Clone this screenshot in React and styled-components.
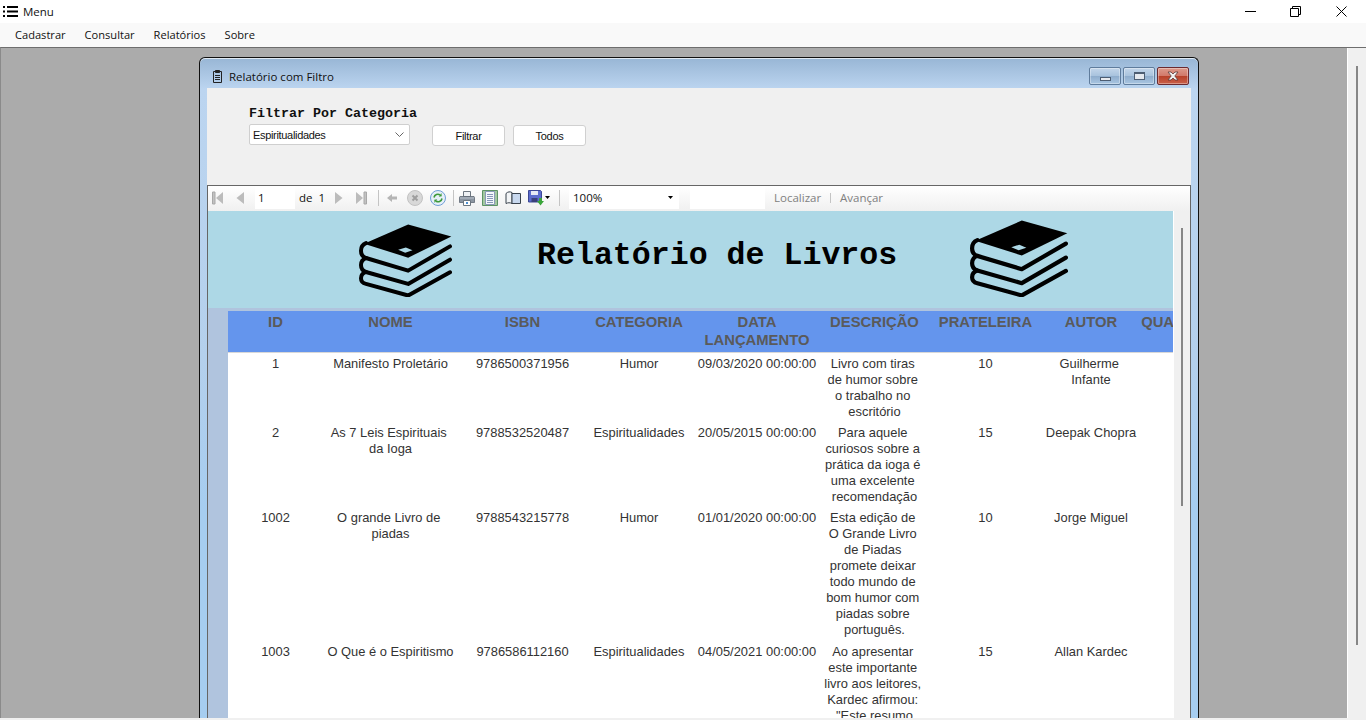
import styled, { createGlobalStyle } from 'styled-components'

const GlobalStyle = createGlobalStyle`
  html, body { margin: 0; height: 100%; overflow: hidden; background: #f0f0f0; }
  #root { height: 100%; }
  * { box-sizing: border-box; }
`
const uiFont = `"Open Sans", "Liberation Sans", sans-serif`
const reportFont = `"Liberation Sans", Arial, sans-serif`
const monoFont = `"Liberation Mono", "Courier New", monospace`

const Shell = styled.div`
  height: 720px;
  display: flex;
  flex-direction: column;
  font-family: ${uiFont};
  color: #111;
`
const TitleBar = styled.header`
  height: 23px;
  background: #fff;
  display: flex;
  align-items: center;
  padding: 0 2px 0 3px;
`
const AppTitle = styled.span`
  margin-left: 5px;
  font-size: 11.5px;
  flex: 1;
`
const CaptionBtn = styled.div`
  width: 45.5px;
  height: 23px;
  display: flex;
  align-items: center;
  justify-content: center;
`
const MenuBar = styled.nav`
  height: 24px;
  background: #f9f9f9;
  display: flex;
  align-items: center;
  padding: 0 0 2px 15px;
  gap: 19px;
  font-size: 11.1px;
`
const Desktop = styled.main`
  flex: 1;
  min-height: 0;
  display: flex;
  overflow: hidden;
  border-top: 1px solid #6e6e6e;
  border-left: 1px solid #8a8a8a;
  background: #ababab;
`
const MdiArea = styled.div`
  width: 1346px;
  padding: 9px 0 0 198px;
  overflow: hidden;
`
const Scrollbar = styled.div`
  background: #f0f0f0;
  display: flex;
  justify-content: center;
  flex: 1;
  padding-top: ${p => p.$top}px;
  border-left: 1px solid ${p => p.$edge};
`
const ScrollThumb = styled.div`
  width: 2px;
  height: ${p => p.$height}px;
  background: #868686;
`
const BottomStrip = styled.div`
  height: 2px;
  background: #f0f0f0;
  flex: none;
`
const ChildWindow = styled.section`
  width: 1000px;
  height: 700px;
  border: 1px solid #101010;
  border-bottom: 0;
  border-radius: 6px 6px 0 0;
  padding: 0 7px;
  background: linear-gradient(#98b6d5 0, #bcd5f0 31px, #b4d0ec 300px, #a6cdf0 450px);
  box-shadow: inset 0 1px 0 #dfe9f3;
`
const ChildTitle = styled.div`
  height: 30px;
  display: flex;
  align-items: center;
  margin: 0 2px 0 5px;
  padding-top: 6px;
`
const ChildTitleText = styled.span`
  margin-left: 6px;
  font-size: 11.5px;
  flex: 1;
`
const WinBtn = styled.div`
  width: 32px;
  height: 18px;
  margin-left: 2px;
  border: 1px solid ${p => (p.$close ? '#6b2a30' : '#5f7c9c')};
  border-radius: 2px;
  display: flex;
  align-items: center;
  justify-content: center;
  box-shadow: inset 0 0 0 1px rgba(255, 255, 255, 0.35);
  background: ${p => p.$close
    ? 'linear-gradient(#dc9a8c 0, #d2796a 48%, #b8412a 52%, #c9604a 100%)'
    : 'linear-gradient(#c3d6ea 0, #a9c3de 48%, #8fadcd 52%, #a9c6e2 100%)'};
`
const MinGlyph = styled.div`
  width: 11px;
  height: 4px;
  margin-top: 5px;
  background: #e8eaee;
  border: 1px solid #4d5d72;
`
const MaxGlyph = styled.div`
  width: 11px;
  height: 8px;
  background: #e4e8ee;
  border: 1px solid #4d5d72;
  border-top-width: 2px;
`
const Client = styled.div`
  background: #f0f0f0;
  height: 670px;
  display: flex;
  flex-direction: column;
`
const FilterPanel = styled.div`
  height: 97px;
  flex: none;
  padding: 18px 0 0 42px;
`
const FilterLabel = styled.div`
  font: bold 13.33px/15px ${monoFont};
  color: #111;
`
const FilterRow = styled.div`
  display: flex;
  margin-top: 3px;
`
const Combo = styled.div`
  width: 161px;
  height: 21px;
  background: #fff;
  border: 1px solid #cfcfcf;
  border-radius: 2px;
  display: flex;
  align-items: center;
  justify-content: space-between;
  padding: 0 5px 0 3px;
  font: 11px ${reportFont};
  letter-spacing: -0.32px;
`
const PlainBtn = styled.div`
  width: 73px;
  height: 21px;
  margin: 1px 0 0 ${p => p.$gap}px;
  background: #fff;
  border: 1px solid #d0d0d0;
  border-radius: 3px;
  display: flex;
  align-items: center;
  justify-content: center;
  font: 11px ${reportFont};
  letter-spacing: -0.3px;
`
const Viewer = styled.div`
  flex: 1;
  min-height: 0;
  display: flex;
  flex-direction: column;
  border: 1px solid #666;
  border-bottom: 0;
`
const Toolbar = styled.div`
  height: 25px;
  flex: none;
  display: flex;
  align-items: center;
  padding-bottom: 2px;
  background: linear-gradient(#fff, #f0f0f0);
  font-size: 11.5px;
`
const Tool = styled.svg`
  flex: none;
  margin-left: ${p => p.$ml}px;
  transform: ${p => (p.$flip ? 'scaleX(-1)' : 'none')};
`
const ToolSep = styled.div`
  width: 1px;
  height: ${p => p.$h || 16}px;
  flex: none;
  margin-left: ${p => p.$ml}px;
  background: #c4c4c4;
`
const ToolField = styled.div`
  width: ${p => p.$w}px;
  height: 23px;
  flex: none;
  margin-left: ${p => p.$ml}px;
  padding-left: ${p => p.$pad || 0}px;
  background: #fff;
  display: flex;
  align-items: center;
  justify-content: space-between;
  padding-right: 6px;
`
const PageOf = styled.div`
  width: 36px;
  margin-left: 4px;
  flex: none;
  display: flex;
  gap: 6px;
`
const ToolLink = styled.span`
  flex: none;
  width: ${p => p.$w}px;
  margin-left: ${p => p.$ml}px;
  color: #808080;
`
const ViewerBody = styled.div`
  flex: 1;
  min-height: 0;
  display: flex;
`
const ReportPage = styled.div`
  width: 965px;
  flex: none;
  overflow: hidden;
  background: #b0c4de;
`
const Banner = styled.div`
  height: 97px;
  background: #add8e6;
  display: flex;
  align-items: center;
  padding-left: 151px;
`
const BannerTitle = styled.h1`
  margin: 0 0 8px 85px;
  width: 433px;
  flex: none;
  font: bold 31.6px ${monoFont};
  color: #000;
`
const BookSvg = styled.svg`
  flex: none;
  margin-top: ${p => p.$top}px;
`
const ReportTable = styled.div`
  margin: 3px 0 0 20px;
  background: #fff;
  min-height: 400px;
  font-family: ${reportFont};
`
const Row = styled.div`
  display: grid;
  grid-template-columns: 95px 135px 129px 104px 132px 103px 119px 92px 107px;
  width: 1016px;
`
const HeadRow = styled(Row)`
  height: 42px;
  background: #6495ed;
  border-bottom: 1px solid #d8d8d8;
`
const HeadCell = styled.div`
  padding-top: 2px;
  text-align: center;
  font-size: 14.8px;
  font-weight: bold;
  line-height: 18px;
  color: #5a5a5a;
  white-space: pre-line;
`
const BodyRow = styled(Row)`
  padding: 3px 0 ${p => p.$pb}px;
`
const Cell = styled.div`
  text-align: center;
  font-size: 12.9px;
  line-height: 16px;
  color: #333;
  white-space: pre-line;
`

const columns = ['ID', 'NOME', 'ISBN', 'CATEGORIA', 'DATA\nLANÇAMENTO', 'DESCRIÇÃO', 'PRATELEIRA', 'AUTOR', 'QUANTIDADE']

const livros = [
  {
    pb: 2,
    cells: ['1', 'Manifesto Proletário', '9786500371956', 'Humor', '09/03/2020 00:00:00',
      'Livro com tiras\nde humor sobre\no trabalho no\nescritório', '10', 'Guilherme\nInfante', ''],
  },
  {
    pb: 2,
    cells: ['2', 'As 7 Leis Espirituais\nda Ioga', '9788532520487', 'Espiritualidades', '20/05/2015 00:00:00',
      'Para aquele\ncuriosos sobre a\nprática da ioga é\numa excelente\nrecomendação', '15', 'Deepak Chopra', ''],
  },
  {
    pb: 3,
    cells: ['1002', 'O grande Livro de\npiadas', '9788543215778', 'Humor', '01/01/2020 00:00:00',
      'Esta edição de\nO Grande Livro\nde Piadas\npromete deixar\ntodo mundo de\nbom humor com\npiadas sobre\nportuguês.', '10', 'Jorge Miguel', ''],
  },
  {
    pb: 2,
    cells: ['1003', 'O Que é o Espiritismo', '9786586112160', 'Espiritualidades', '04/05/2021 00:00:00',
      'Ao apresentar\neste importante\nlivro aos leitores,\nKardec afirmou:\n"Este resumo', '15', 'Allan Kardec', ''],
  },
]

// wrapped lines keep their trailing space in the report, which pulls them a bit to the left
const keepTrailingSpace = text => text.replace(/\n/g, '\u00a0\n')

const MenuIcon = () => (
  <svg width="15" height="11" viewBox="0 0 15 11">
    <path d="M0 0h2v2H0zM4 0h11v2H4zM0 4.500h2v2H0zM4 4.500h11v2H4zM0 9h2v2H0zM4 9h11v2H4z" fill="#000" />
  </svg>
)

const ClipIcon = () => (
  <svg width="11" height="14" viewBox="0 0 11 14" fill="none" stroke="#222">
    <path d="M1.500 2.500h8v11h-8z" />
    <path d="M3.500 1.500h4v2h-4z" fill="#222" />
    <path d="M3 6.500h5M3 8.500h5M3 10.500h5" />
  </svg>
)

const BooksIcon = ({ width, height, top }) => (
  <BookSvg $top={top} width={width} height={height} viewBox="57 41 280 219" fill="none">
    <path d="M205 42 L335 78 L205 142 L72 100 Z" fill="#000" />
    <path d="M175 118 L198 111 L218 120 L196 127 Z" fill="#add8e6" />
    <g stroke="#000" strokeWidth="12" strokeLinecap="round" strokeLinejoin="round">
      <path d="M78 98 C58 106 58 136 78 143 L205 181 L331 108" />
      <path d="M78 143 C58 150 58 178 78 185 L205 221 L331 148" />
      <path d="M78 185 C58 192 58 216 78 221 L205 256 L331 186" />
    </g>
  </BookSvg>
)

const FirstIcon = ({ flip, ml }) => (
  <Tool $ml={ml} $flip={flip} width="11" height="14" viewBox="0 0 11 14">
    <path d="M0.500 1h2.500v12H0.500z" fill="#c2c2c2" stroke="#a8a8a8" />
    <path d="M11 1v12L4 7z" fill="#bcbcbc" />
  </Tool>
)

const PrevIcon = ({ flip, ml }) => (
  <Tool $ml={ml} $flip={flip} width="8" height="14" viewBox="0 0 8 14">
    <path d="M8 1v12L0.500 7z" fill="#bcbcbc" />
  </Tool>
)

const BackIcon = () => (
  <Tool $ml={8} width="10" height="10" viewBox="0 0 10 10">
    <path d="M0 5l5-4v2.500h5v3H5V9z" fill="#b5b5b5" />
  </Tool>
)

const StopIcon = () => (
  <Tool $ml={10} width="16" height="16" viewBox="0 0 16 16">
    <circle cx="8" cy="8" r="7.500" fill="#d8d8d8" stroke="#c2c2c2" />
    <path d="M5.500 5.500l5 5M10.500 5.500l-5 5" stroke="#9e9e9e" strokeWidth="2" />
  </Tool>
)

const RefreshIcon = () => (
  <Tool $ml={7} width="16" height="16" viewBox="0 0 16 16" fill="none">
    <circle cx="8" cy="8" r="7.500" fill="#e6eff9" stroke="#6f9ed6" />
    <path d="M4 7.500C4.500 4.500 8 3.500 10 5" stroke="#3d9a3a" strokeWidth="1.600" />
    <path d="M8.800 6.800l3-.6-.4-3.200z" fill="#3d9a3a" />
    <path d="M12 8.500C11.500 11.500 8 12.500 6 11" stroke="#3d9a3a" strokeWidth="1.600" />
    <path d="M7.200 9.200l-3 .6.400 3.200z" fill="#3d9a3a" />
  </Tool>
)

const PrintIcon = () => (
  <Tool $ml={5} width="16" height="16" viewBox="0 0 16 16">
    <path d="M4.500 1.500h7v5h-7z" fill="#eef1f4" stroke="#6d7680" />
    <path d="M1 6.500h14a1 1 0 0 1 .5 1v5h-15v-5a1 1 0 0 1 .5-1z" fill="#8c96a2" stroke="#5f6873" strokeWidth="0.800" />
    <path d="M1 7.500h14v1H1z" fill="#b9c1ca" />
    <path d="M4.500 10.500h7v5h-7z" fill="#fff" stroke="#6d7680" />
    <path d="M7 12h2v2H7z" fill="#4c8fd0" />
  </Tool>
)

const PageIcon = () => (
  <Tool $ml={7} width="16" height="16" viewBox="0 0 16 16" fill="none">
    <path d="M0.500 0.500h15v15h-15z" fill="#a3c7a1" stroke="#5d9465" />
    <path d="M3.500 1.500h9v13h-9z" fill="#f5f8fc" stroke="#8b9ab8" />
    <path d="M5 4.500h6M5 6.500h6M5 8.500h6M5 10.500h6M5 12.500h6" stroke="#8797b8" />
  </Tool>
)

const BookIcon = () => (
  <Tool $ml={7} width="16" height="14" viewBox="0 0 16 14">
    <path d="M1 2.500C3 0.500 5 0.500 7 1.500v11c-2-1-4-1-6 0z" fill="#f2f4f6" stroke="#39424d" />
    <path d="M7 2.500h8.500v10H7z" fill="#c8d8ee" stroke="#39424d" />
  </Tool>
)

const SaveIcon = () => (
  <Tool $ml={7} width="16" height="16" viewBox="0 0 16 16">
    <path d="M0.500 0.500h12l1 1v10.500h-13z" fill="#5c6ccd" stroke="#3c4795" />
    <path d="M3 1h7v4H3z" fill="#e6e9f5" />
    <path d="M3.500 8h6v4h-6z" fill="#39407a" />
    <path d="M11 8h3v3h2l-3.500 4.500L9 11h2z" fill="#3aa53a" />
  </Tool>
)

const Caret = ({ ml }) => (
  <Tool $ml={ml} width="5" height="3" viewBox="0 0 5 3">
    <path d="M0 0h5L2.500 3z" fill="#000" />
  </Tool>
)

const App = () => {
  return (
    <Shell>
      <GlobalStyle />
      <TitleBar>
        <MenuIcon />
        <AppTitle>Menu</AppTitle>
        <CaptionBtn>
          <svg width="11" height="1" viewBox="0 0 11 1"><path d="M0 0h11v1H0z" fill="#000" /></svg>
        </CaptionBtn>
        <CaptionBtn>
          <svg width="11" height="11" viewBox="0 0 11 11" fill="none" stroke="#000">
            <path d="M0.500 2.500h8v8h-8z" />
            <path d="M2.500 2.500V0.500h8v8H8.500" />
          </svg>
        </CaptionBtn>
        <CaptionBtn>
          <svg width="11" height="11" viewBox="0 0 11 11" stroke="#000">
            <path d="M0.500 0.500l10 10M10.500 0.500l-10 10" />
          </svg>
        </CaptionBtn>
      </TitleBar>
      <MenuBar>
        <span>Cadastrar</span>
        <span>Consultar</span>
        <span>Relatórios</span>
        <span>Sobre</span>
      </MenuBar>
      <Desktop>
        <MdiArea>
          <ChildWindow>
            <ChildTitle>
              <ClipIcon />
              <ChildTitleText>Relatório com Filtro</ChildTitleText>
              <WinBtn><MinGlyph /></WinBtn>
              <WinBtn><MaxGlyph /></WinBtn>
              <WinBtn $close>
                <svg width="14" height="10" viewBox="0 0 14 10">
                  <path d="M2 1h3l2 2 2-2h3L8.800 5 12 9H9L7 7 5 9H2l3.200-4z" fill="#f1f1f1" stroke="#5b3a3a" strokeWidth="0.800" />
                </svg>
              </WinBtn>
            </ChildTitle>
            <Client>
              <FilterPanel>
                <FilterLabel>Filtrar Por Categoria</FilterLabel>
                <FilterRow>
                  <Combo>
                    Espiritualidades
                    <svg width="9" height="5" viewBox="0 0 9 5" fill="none" stroke="#666">
                      <path d="M0.500 0.500l4 4 4-4" />
                    </svg>
                  </Combo>
                  <PlainBtn $gap={22}>Filtrar</PlainBtn>
                  <PlainBtn $gap={8}>Todos</PlainBtn>
                </FilterRow>
              </FilterPanel>
              <Viewer>
                <Toolbar>
                  <FirstIcon ml={4} />
                  <PrevIcon ml={13} />
                  <ToolField $ml={11} $w={40} $pad={3}>1</ToolField>
                  <PageOf><span>de</span><span>1</span></PageOf>
                  <PrevIcon flip ml={0} />
                  <FirstIcon flip ml={13} />
                  <ToolSep $ml={11} />
                  <BackIcon />
                  <StopIcon />
                  <RefreshIcon />
                  <ToolSep $ml={7} />
                  <PrintIcon />
                  <PageIcon />
                  <BookIcon />
                  <SaveIcon />
                  <Caret ml={1} />
                  <ToolSep $ml={9} />
                  <ToolField $ml={9} $w={110} $pad={4}>100%<Caret ml={0} /></ToolField>
                  <ToolField $ml={11} $w={75} />
                  <ToolLink $ml={9} $w={47}>Localizar</ToolLink>
                  <ToolSep $ml={9} $h={10} />
                  <ToolLink $ml={9} $w={50}>Avançar</ToolLink>
                </Toolbar>
                <ViewerBody>
                  <ReportPage>
                    <Banner>
                      <BooksIcon width={93} height={73} top={2} />
                      <BannerTitle>Relatório de Livros</BannerTitle>
                      <BooksIcon width={98} height={77} top={-2} />
                    </Banner>
                    <ReportTable>
                      <HeadRow>
                        {columns.map(col => <HeadCell key={col}>{col}</HeadCell>)}
                      </HeadRow>
                      {livros.map(livro => (
                        <BodyRow key={livro.cells[0]} $pb={livro.pb}>
                          {livro.cells.map((text, i) => <Cell key={i}>{keepTrailingSpace(text)}</Cell>)}
                        </BodyRow>
                      ))}
                    </ReportTable>
                  </ReportPage>
                  <Scrollbar $top={17} $edge="#fff">
                    <ScrollThumb $height={278} />
                  </Scrollbar>
                </ViewerBody>
              </Viewer>
            </Client>
          </ChildWindow>
        </MdiArea>
        <Scrollbar $top={18} $edge="#fff">
          <ScrollThumb $height={579} />
        </Scrollbar>
      </Desktop>
      <BottomStrip />
    </Shell>
  )
}

export default App
